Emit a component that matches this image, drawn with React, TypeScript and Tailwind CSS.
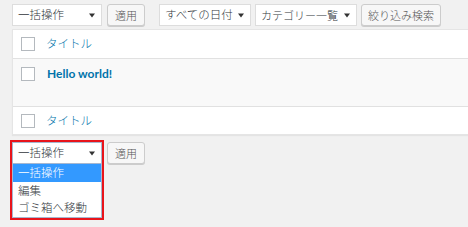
import React from "react";

const jp = "font-['Noto_Sans_CJK_JP','Noto_Sans',sans-serif]";

function Arrow() {
  return (
    <svg width="6" height="5" viewBox="0 0 6 5" className="shrink-0">
      <path d="M0 0.5 L6 0.5 L3 4.5 Z" fill="#333" />
    </svg>
  );
}

function Select({
  label,
  w,
  open = false,
  size = "text-[11.5px]",
}: {
  label: string;
  w: string;
  open?: boolean;
  size?: string;
}) {
  return (
    <div
      className={`${w} h-[22px] flex items-center justify-between bg-white border ${
        open ? "border-[#a7b7cf]" : "border-[#ddd]"
      } pl-[5px] pr-[6px] ${size} text-[#32373c] leading-none`}
    >
      <span className="whitespace-nowrap">{label}</span>
      <Arrow />
    </div>
  );
}

function Button({ label, w }: { label: string; w: string }) {
  return (
    <div
      className={`${w} h-[22px] flex items-center justify-center bg-[#f7f7f7] border border-[#cccccc] rounded-[3px] text-[11px] text-[#555] shadow-[0_1px_0_#ccc] leading-none whitespace-nowrap`}
    >
      {label}
    </div>
  );
}

function Checkbox() {
  return <div className="w-[14px] h-[14px] border border-[#b4b9be] bg-white shrink-0" />;
}

export default function App() {
  return (
    <div className={`w-[468px] h-[227px] overflow-hidden bg-[#f1f1f1] pl-[12px] pt-[4px] font-light ${jp}`}>
      {/* top nav */}
      <div className="flex items-start">
        <Select label="一括操作" w="w-[90px]" />
        <div className="ml-[5px]">
          <Button label="適用" w="w-[38px]" />
        </div>
        <div className="ml-[14px]">
          <Select label="すべての日付" w="w-[92px]" />
        </div>
        <div className="ml-[4px]">
          <Select label="カテゴリー一覧" w="w-[102px]" size="text-[11px]" />
        </div>
        <div className="ml-[4px]">
          <Button label="絞り込み検索" w="w-[80px]" />
        </div>
      </div>

      {/* table */}
      <div className="mt-[3px] bg-white border border-[#e5e5e5] border-r-0 shadow-[0_1px_1px_rgba(0,0,0,0.05)]">
        <div className="h-[29px] flex items-center pl-[8px] border-b border-[#e1e1e1]">
          <Checkbox />
          <span className="ml-[11px] text-[11.5px] text-[#0073aa]">タイトル</span>
        </div>
        <div className="h-[47px] bg-[#f9f9f9] flex items-start pl-[8px] pt-[8px]">
          <Checkbox />
          <span className="ml-[12px] -mt-[2px] text-[12px] font-bold text-[#0073aa] font-['Lato','Noto_Sans',sans-serif]">
            Hello world!
          </span>
        </div>
        <div className="h-[28px] flex items-center pl-[8px] border-t border-[#e1e1e1]">
          <Checkbox />
          <span className="ml-[11px] text-[11.5px] text-[#0073aa]">タイトル</span>
        </div>
      </div>

      {/* bottom nav with open dropdown */}
      <div className="mt-[5px] flex items-start">
        <div className="-ml-[2px] border-2 border-[#e8141b] flex flex-col">
          <Select label="一括操作" w="w-[90px]" open />
          <div className="w-[90px] bg-white border border-t-0 border-[#a7b7cf] text-[11.5px] text-[#32373c] pb-[1px]">
            <div className="h-[18px] flex items-center pl-[5px] bg-[#3399ff] text-white leading-none">一括操作</div>
            <div className="h-[17px] flex items-center pl-[5px] leading-none">編集</div>
            <div className="h-[17px] flex items-center pl-[5px] leading-none">ゴミ箱へ移動</div>
          </div>
        </div>
        <div className="ml-[3px] mt-[2px]">
          <Button label="適用" w="w-[38px]" />
        </div>
      </div>
    </div>
  );
}
